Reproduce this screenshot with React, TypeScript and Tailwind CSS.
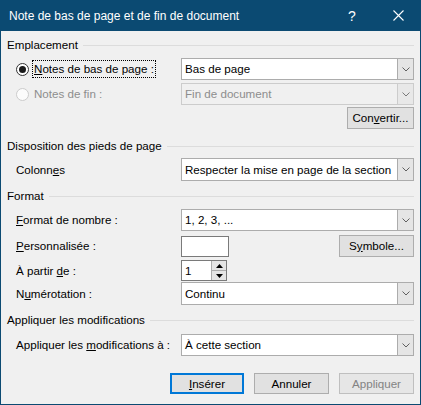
import { ReactNode } from "react"

const font = { fontFamily: '"Segoe UI", "Liberation Sans", Arial, sans-serif' }

function Chevron({ color = "#606060" }: { color?: string }) {
  return (
    <svg width="8" height="5" viewBox="0 0 8 5" fill="none">
      <path d="M0.5 0.5 L4 4 L7.5 0.5" stroke={color} strokeWidth="1" />
    </svg>
  )
}

function Select({ value, disabled = false, h = "h-[22px]" }: { value: string; disabled?: boolean; h?: string }) {
  return (
    <div
      className={`flex flex-1 min-w-0 ${h} border ${
        disabled ? "border-[#cccccc] bg-[#f0f0f0] text-[#8d8d8d]" : "border-[#acacac] bg-white text-black"
      }`}
    >
      <div className="flex-1 flex items-center pl-[3px] overflow-hidden whitespace-nowrap">{value}</div>
      <div
        className={`w-[16px] shrink-0 flex items-center justify-center border-l ${
          disabled ? "border-[#cccccc] bg-[#e8e8e8]" : "border-[#acacac] bg-[#e5e5e5]"
        }`}
      >
        <Chevron color={disabled ? "#7a7a7a" : "#606060"} />
      </div>
    </div>
  )
}

function Section({ title, className = "" }: { title: string; className?: string }) {
  return (
    <div className={`flex items-center h-[16px] pl-[6px] ${className}`}>
      <span className="whitespace-nowrap">{title}</span>
      <div className="flex-1 h-px bg-[#dcdcdc] ml-[5px]" />
    </div>
  )
}

function Row({ label, children, className = "" }: { label: ReactNode; children: ReactNode; className?: string }) {
  return (
    <div className={`flex items-center pl-[15px] ${className}`}>
      <div className="w-[165px] shrink-0 whitespace-nowrap">{label}</div>
      {children}
    </div>
  )
}

function Btn({ children, w, primary = false, disabled = false }: { children: ReactNode; w: string; primary?: boolean; disabled?: boolean }) {
  return (
    <div
      className={`${w} h-[21px] flex items-center justify-center ${
        primary
          ? "border-2 border-[#0078d7] bg-[#e1e1e1]"
          : disabled
          ? "border border-[#bfbfbf] bg-[#e6e6e6] text-[#838383]"
          : "border border-[#adadad] bg-[#e1e1e1]"
      }`}
    >
      {children}
    </div>
  )
}

export default function App() {
  return (
    <div className="w-[421px] h-[405px] flex flex-col text-[11.6px] leading-[16px] text-black" style={font}>
      {/* Title bar */}
      <div className="h-[31px] bg-[#0b4a72] flex items-center text-white pl-[9px]">
        <span className="flex-1 text-[12px]">Note de bas de page et de fin de document</span>
        <span className="w-[46px] text-center text-[14px]">?</span>
        <div className="w-[46px] flex items-center justify-center">
          <svg width="11" height="11" viewBox="0 0 11 11">
            <path d="M0.5 0.5 L10.5 10.5 M10.5 0.5 L0.5 10.5" stroke="white" strokeWidth="1.1" />
          </svg>
        </div>
      </div>

      {/* Body */}
      <div className="flex-1 flex flex-col bg-[#f0f0f0] border-x border-b border-[#0b4a72] pr-[6px]">
        <Section title="Emplacement" className="mt-[6px]" />

        <div className="flex items-center pl-[15px] mt-[5px]">
          <div className="w-[165px] shrink-0 flex items-center">
            <div className="w-[13px] h-[13px] rounded-full border border-[#333333] bg-white flex items-center justify-center">
              <div className="w-[7px] h-[7px] rounded-full bg-[#1a1a1a]" />
            </div>
            <span className="ml-[3px] px-px border border-dotted border-black leading-[16px] whitespace-nowrap">
              <u>N</u>otes de bas de page :
            </span>
          </div>
          <Select value="Bas de page" />
        </div>

        <div className="flex items-center pl-[15px] mt-[3px]">
          <div className="w-[165px] shrink-0 flex items-center text-[#8d8d8d]">
            <div className="w-[13px] h-[13px] rounded-full border border-[#cccccc] bg-[#fcfcfc]" />
            <span className="ml-[4px] px-px">Notes de fin :</span>
          </div>
          <Select value="Fin de document" disabled />
        </div>

        <div className="flex justify-end mt-[2px]">
          <div className="h-[22px] w-[67px] flex items-center justify-center border border-[#adadad] bg-[#e1e1e1]">
            Con<u>v</u>ertir...
          </div>
        </div>

        <Section title="Disposition des pieds de page" className="mt-[9px]" />
        <Row label={<>Colonn<u>e</u>s</>} className="mt-[4px]">
          <Select value="Respecter la mise en page de la section" h="h-[23px]" />
        </Row>

        <Section title="Format" className="mt-[7px]" />
        <Row label={<><u>F</u>ormat de nombre :</>} className="mt-[5px]">
          <Select value="1, 2, 3, ..." />
        </Row>
        <Row label={<><u>P</u>ersonnalisée :</>} className="mt-[4px]">
          <div className="w-[48px] h-[21px] border border-[#7a7a7a] bg-white" />
          <div className="flex-1" />
          <div className="h-[22px] w-[75px] flex items-center justify-center border border-[#adadad] bg-[#e1e1e1]">
            S<u>y</u>mbole...
          </div>
        </Row>
        <Row label={<>À partir <u>d</u>e :</>} className="mt-[3px]">
          <div className="w-[46px] h-[21px] border border-[#7a7a7a] bg-white flex">
            <div className="flex-1 flex items-center pl-[3px]">1</div>
            <div className="w-[15px] flex flex-col border-l border-[#acacac] bg-[#e5e5e5]">
              <div className="flex-1 flex items-center justify-center border-b border-[#acacac]">
                <svg width="7" height="4" viewBox="0 0 7 4"><path d="M3.5 0 L7 4 L0 4 Z" fill="#000" /></svg>
              </div>
              <div className="flex-1 flex items-center justify-center">
                <svg width="7" height="4" viewBox="0 0 7 4"><path d="M0 0 L7 0 L3.5 4 Z" fill="#000" /></svg>
              </div>
            </div>
          </div>
        </Row>
        <Row label={<>N<u>u</u>mérotation :</>} className="mt-[1px]">
          <Select value="Continu" h="h-[23px]" />
        </Row>

        <Section title="Appliquer les modifications" className="mt-[7px]" />
        <Row label={<>Appliquer les <u>m</u>odifications à :</>} className="mt-[6px]">
          <Select value="À cette section" />
        </Row>

        <div className="flex justify-end gap-[10px] mt-[17px]">
          <Btn w="w-[74px]" primary>
            <u>I</u>nsérer
          </Btn>
          <Btn w="w-[75px]">Annuler</Btn>
          <Btn w="w-[75px]" disabled>
            Appliquer
          </Btn>
        </div>
      </div>
    </div>
  )
}
